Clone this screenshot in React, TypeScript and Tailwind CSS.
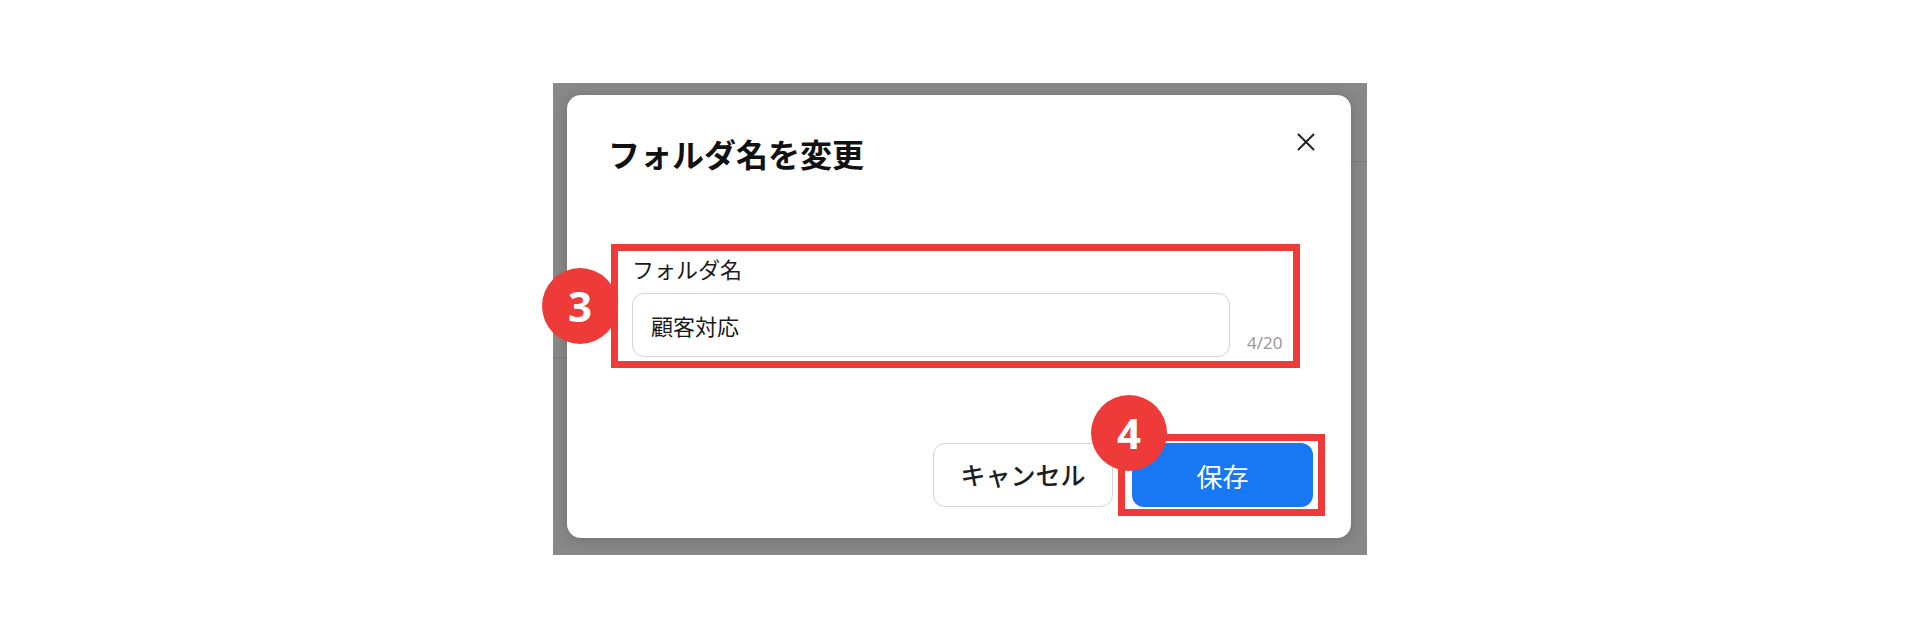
import React from 'react';

const jp = { fontFamily: '"Noto Sans CJK JP", "Noto Sans", sans-serif' };

function Badge({ n, className }: { n: number; className: string }) {
  return (
    <div
      className={`absolute flex h-[76px] w-[76px] items-center justify-center rounded-full bg-[#ef3a3a] text-[42px] font-bold leading-none text-white ${className}`}
      style={{ fontFamily: '"Noto Sans", Roboto, sans-serif' }}
    >
      {n}
    </div>
  );
}

function CloseIcon() {
  return (
    <svg width="18" height="18" viewBox="0 0 18 18" fill="none" stroke="#222" strokeWidth="2" strokeLinecap="round">
      <path d="M1.5 1.5 16.5 16.5" />
      <path d="M16.5 1.5 1.5 16.5" />
    </svg>
  );
}

export default function App() {
  return (
    <div className="flex h-[640px] w-[1920px] bg-white pt-[83px] pl-[553px]" style={jp}>
      <div className="relative h-[472px] w-[814px] bg-[#888888] pt-[12px] pl-[14px]">
        {/* underlying page hints */}
        <div className="absolute top-[78px] right-0 h-[1px] w-[16px] bg-[#7a7a7a]" />
        <div className="absolute top-[274px] left-0 h-[1px] w-[14px] bg-[#7a7a7a]" />

        <div className="relative flex h-[443px] w-[784px] flex-col rounded-[14px] bg-white shadow-[0_2px_14px_rgba(0,0,0,0.18)]">
          <div className="flex h-[40px] items-center justify-between pt-0 pl-[41px] pr-[36px] mt-[38px]">
            <h2 className="text-[32px] font-bold leading-[40px] text-[#111]">フォルダ名を変更</h2>
            <button className="mt-[-22px] flex items-center justify-center">
              <CloseIcon />
            </button>
          </div>

          <div className="relative mt-[71px] ml-[44px] mr-[51px] border-[7px] border-[#ef3a3a] pt-[2px] pb-[4px] pl-[14px]">
            <Badge n={3} className="left-[-76px] top-[17px]" />
            <label className="block text-[22px] leading-[30px] text-[#1a1a1a]">フォルダ名</label>
            <div className="mt-[10px] flex items-end">
              <div className="flex h-[64px] w-[598px] items-center rounded-[12px] border border-[#d4d4d0] pl-[18px] text-[22px] text-[#1a1a1a]">
                顧客対応
              </div>
              <span
                className="mb-[3px] ml-[17px] text-[17px] leading-[22px] text-[#9a9a9a]"
                style={{ fontFamily: '"Noto Sans", sans-serif' }}
              >
                4/20
              </span>
            </div>
          </div>

          <div className="mt-[66px] flex items-center justify-end pr-[26px]">
            <button className="flex h-[64px] w-[180px] items-center justify-center rounded-[12px] border border-[#d4d4d4] bg-white text-[25px] font-medium text-[#1e1e1e]">
              キャンセル
            </button>
            <div className="relative ml-[5px] border-[7px] border-[#ef3a3a] py-[2px] pl-[7px] pr-[5px]">
              <Badge n={4} className="left-[-34px] top-[-46px]" />
              <button className="flex h-[64px] w-[181px] items-center justify-center rounded-[12px] bg-[#1877f2] text-[26px] text-white">
                保存
              </button>
            </div>
          </div>
        </div>
      </div>
    </div>
  );
}
